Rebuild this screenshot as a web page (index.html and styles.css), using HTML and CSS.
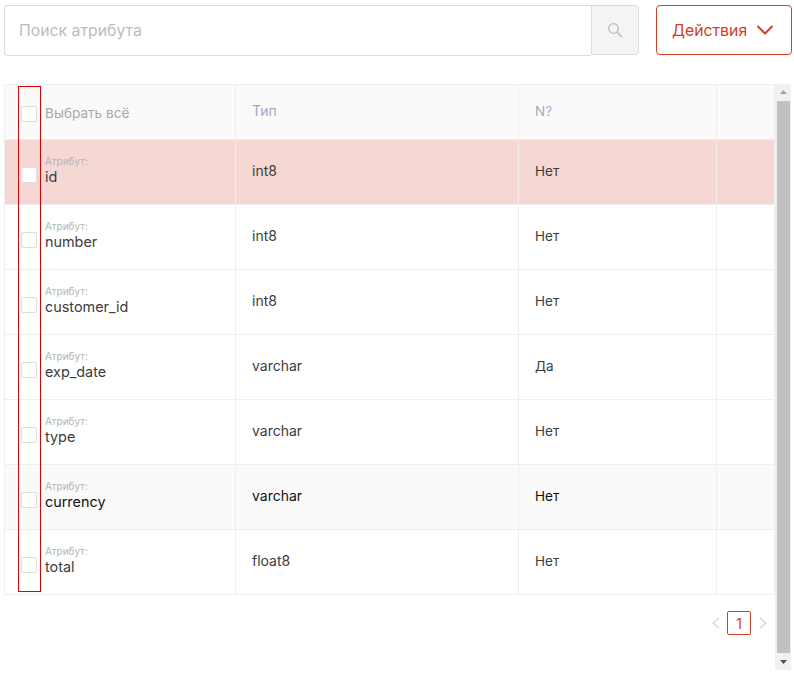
FILE: index.html
```html
<!DOCTYPE html>
<html lang="ru">
<head>
<meta charset="utf-8">
<title>Атрибуты</title>
<link rel="stylesheet" href="styles.css">
</head>
<body>
<div class="toolbar">
  <div class="search">
    <input class="search-input" type="text" placeholder="Поиск атрибута">
    <button class="search-btn" type="button" aria-label="Поиск">
      <svg width="16" height="16" viewBox="0 0 16 16" fill="none" stroke="#bdbdbd" stroke-width="1.3"><circle cx="6.5" cy="6.5" r="4.8"/><path d="M10 10l5 5" stroke-width="1.6"/></svg>
    </button>
  </div>
  <button class="actions" type="button">Действия
    <svg width="18" height="10" viewBox="0 0 18 10" fill="none" stroke="#d2401f" stroke-width="2"><path d="M1.5 1l7.5 7.5L16.500 1"/></svg>
  </button>
</div>
<div class="panel">
  <div class="content">
    <div class="table">
      <div class="row head">
        <div class="cell c1"><span class="check"></span><span class="all">Выбрать всё</span></div>
        <div class="cell c2 th">Тип</div>
        <div class="cell c3 th">N?</div>
        <div class="cell c4"></div>
      </div>
      <div class="row active">
        <div class="cell c1"><span class="check"></span><div class="attr"><small>Атрибут:</small><span>id</span></div></div>
        <div class="cell c2">int8</div><div class="cell c3">Нет</div><div class="cell c4"></div>
      </div>
      <div class="row">
        <div class="cell c1"><span class="check"></span><div class="attr"><small>Атрибут:</small><span>number</span></div></div>
        <div class="cell c2">int8</div><div class="cell c3">Нет</div><div class="cell c4"></div>
      </div>
      <div class="row">
        <div class="cell c1"><span class="check"></span><div class="attr"><small>Атрибут:</small><span>customer_id</span></div></div>
        <div class="cell c2">int8</div><div class="cell c3">Нет</div><div class="cell c4"></div>
      </div>
      <div class="row">
        <div class="cell c1"><span class="check"></span><div class="attr"><small>Атрибут:</small><span>exp_date</span></div></div>
        <div class="cell c2">varchar</div><div class="cell c3">Да</div><div class="cell c4"></div>
      </div>
      <div class="row">
        <div class="cell c1"><span class="check"></span><div class="attr"><small>Атрибут:</small><span>type</span></div></div>
        <div class="cell c2">varchar</div><div class="cell c3">Нет</div><div class="cell c4"></div>
      </div>
      <div class="row hover">
        <div class="cell c1"><span class="check"></span><div class="attr"><small>Атрибут:</small><span>currency</span></div></div>
        <div class="cell c2">varchar</div><div class="cell c3">Нет</div><div class="cell c4"></div>
      </div>
      <div class="row">
        <div class="cell c1"><span class="check"></span><div class="attr"><small>Атрибут:</small><span>total</span></div></div>
        <div class="cell c2">float8</div><div class="cell c3">Нет</div><div class="cell c4"></div>
      </div>
    </div>
    <div class="pager">
      <svg width="10" height="12" viewBox="0 0 10 12" fill="none" stroke="#cfcfcf" stroke-width="1.2"><path d="M8 1L2 6l6 5"/></svg>
      <span class="page">1</span>
      <svg width="10" height="12" viewBox="0 0 10 12" fill="none" stroke="#cfcfcf" stroke-width="1.2"><path d="M3 1l6 5-6 5"/></svg>
    </div>
  </div>
  <div class="scrollbar">
    <svg width="15" height="17" viewBox="0 0 15 17"><path d="M4 10l3.500-4 3.500 4z" fill="#a3a3a3"/></svg>
    <div class="thumb"></div>
    <svg width="15" height="17" viewBox="0 0 15 17"><path d="M4 7l3.500 4 3.500-4z" fill="#505050"/></svg>
  </div>
</div>
<div class="marker"></div>
</body>
</html>
```
FILE: styles.css
```css
* { box-sizing: border-box; }
html, body { margin: 0; height: 674px; overflow: hidden; background: #fff; }
body { padding: 5px 2px 0 4px; font-family: "Inter", "Noto Sans", sans-serif; font-size: 14px; color: #3c3c3c; position: relative; }
.toolbar { display: flex; height: 51px; align-items: flex-start; }
.search { display: flex; width: 635px; height: 51px; }
.search-input { flex: 1; height: 51px; min-width: 0; border: 1px solid #dcdcdc; border-right: 0; border-radius: 4px 0 0 4px; padding: 0 14px; font: 15.8px "Inter", sans-serif; outline: none; }
.search-input::placeholder { color: #bcbcbc; opacity: 1; }
.search-btn { width: 48px; height: 50px; padding: 0; border: 1px solid #dcdcdc; border-radius: 0 4px 4px 0; background: #f4f4f4; display: flex; align-items: center; justify-content: center; }
.actions { width: 136px; height: 50px; margin-left: 17px; padding: 0 0 0 15px; border: 1px solid #d2401f; border-radius: 4px; background: #fff; color: #d2401f; font: 15.8px "Inter", sans-serif; display: flex; align-items: center; justify-content: flex-start; gap: 9px; }
.panel { display: flex; margin-top: 28px; height: 586px; }
.content { width: 771px; }
.table { border: 1px solid #eeeeee; border-top-color: #f0f0f0; }
.row { display: flex; height: 65px; border-bottom: 1px solid #eeeeee; }
.row:last-child { border-bottom: 0; height: 64px; }
.head { height: 55px; background: #fafafa; }
.active { background: #f5d8d3; }
.hover { background: #fafafa; color: #111; }
.cell { display: flex; align-items: center; padding-left: 16px; border-right: 1px solid #eeeeee; padding-bottom: 2px; }
.c1 { width: 231px; padding-left: 16px; padding-bottom: 0; }
.c2 { width: 283px; padding-bottom: 3px; }
.c3 { width: 198px; font-size: 13.5px; }
.c4 { flex: 1; border-right: 0; }
.active .cell { border-right-color: #f4ecea; }
.check { width: 16px; height: 16px; margin-right: 8px; flex: none; background: #fff; border: 1px solid #dedede; border-radius: 2px; position: relative; top: 3px; }
.head .check { top: 2px; }
.all { color: #a8a8a8; position: relative; top: 1px; font-size: 13.6px; }
.th { color: #a3a6c9; padding-bottom: 3px; }
.attr { display: flex; flex-direction: column; position: relative; top: -1px; }
.attr small { font-size: 10px; line-height: 11px; color: #b5b5b5; position: relative; top: -1px; }
.attr span { font-size: 14.4px; line-height: 17px; margin-top: 0; }
.pager { display: flex; justify-content: flex-end; align-items: center; gap: 6px; margin-top: 16px; padding-right: 8px; }
.page { width: 24px; height: 24px; border: 1px solid #d2401f; border-radius: 2px; color: #d2401f; font-size: 14px; display: flex; align-items: center; justify-content: center; }
.scrollbar { width: 16px; background: #f1f1f1; display: flex; flex-direction: column; align-items: center; }
.thumb { flex: 1; width: 13px; background: #c1c1c1; }
.marker { position: absolute; left: 18px; top: 86px; width: 23px; height: 506px; border: 1px solid #e00000; pointer-events: none; }
```
